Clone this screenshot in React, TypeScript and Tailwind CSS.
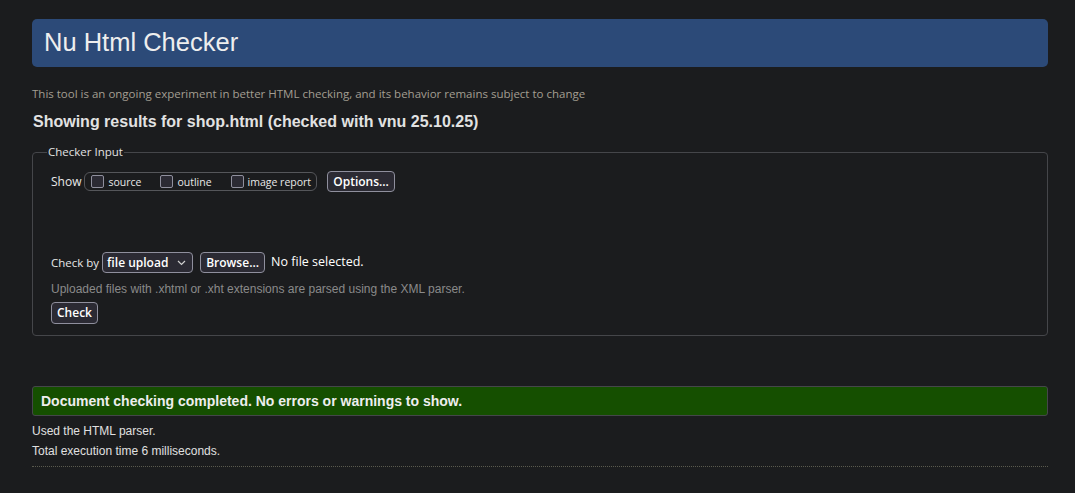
import React from 'react';

const sans = "font-['Liberation_Sans',Arial,sans-serif]";
const ui = "font-['Open_Sans','Noto_Sans',sans-serif]";

function Box({ label }: { label: string }) {
  return (
    <label className="flex flex-none items-center gap-[4px] whitespace-nowrap">
      <span className="w-[13px] h-[13px] rounded-[2px] border border-[#8f8f9d] bg-[#2b2a33]" />
      <span className="text-[10.5px] leading-[14px] text-[#e8e8e8]">{label}</span>
    </label>
  );
}

function Btn({ children, w }: { children: React.ReactNode; w: string }) {
  return (
    <button
      className={`${w} h-[21px] flex items-center justify-center rounded-[4px] border border-[#8f8f9d] bg-[#2b2a33] text-[12px] font-semibold text-white leading-none whitespace-nowrap`}
    >
      {children}
    </button>
  );
}

export default function App() {
  return (
    <div className={`min-h-[493px] bg-[#1b1c1e] ${sans}`}>
      <div className="w-[1016px] ml-[32px] pt-[19px] pb-[26px]">
        {/* Header */}
        <div className="h-[48px] rounded-[5px] bg-[#2c4a78] flex items-center pl-[12px]">
          <h1 className="text-[25.5px] leading-none text-[#eeeeee]">Nu Html Checker</h1>
        </div>

        <p className={`${ui} mt-[19px] text-[11.5px] leading-[16px] text-[#a39e92]`}>
          This tool is an ongoing experiment in better HTML checking, and its behavior remains subject to change
        </p>
        <h2 className="mt-[10px] ml-[1px] text-[16px] leading-[20px] font-bold text-[#e2e2e2]">
          Showing results for shop.html (checked with vnu 25.10.25)
        </h2>

        {/* Checker input */}
        <fieldset className={`${ui} mt-[12px] border border-[#45464a] rounded-[4px] pl-[18px] pb-[11px]`}>
          <legend className="ml-[-4px] px-[1px] text-[11.5px] leading-[16px] text-[#e2e2e2]">Checker Input</legend>

          <div className="pt-[11px] flex items-center h-[32px]">
            <span className="text-[12px] text-[#e8e8e8] mr-[3px]">Show</span>
            <div className="h-[19px] flex items-center gap-[19px] pl-[6px] pr-[5px] rounded-[6px] border border-[#55565a]">
              <Box label="source" />
              <Box label="outline" />
              <Box label="image report" />
            </div>
            <div className="ml-[10px]">
              <Btn w="w-[68px]">Options...</Btn>
            </div>
          </div>

          <div className="mt-[60px] flex items-center">
            <span className="text-[11.5px] text-[#e8e8e8] mr-[3px]">Check by</span>
            <div className="w-[91px] h-[21px] flex items-center justify-between pl-[4px] pr-[5px] rounded-[4px] border border-[#8f8f9d] bg-[#2b2a33]">
              <span className="text-[12px] font-semibold text-white leading-none">file upload</span>
              <svg width="9" height="6" viewBox="0 0 9 6" fill="none" className="mr-[1px]">
                <path d="M1 1l3.5 3.5L8 1" stroke="#d0d0d0" strokeWidth="1.2" />
              </svg>
            </div>
            <div className="ml-[7px]">
              <Btn w="w-[65px]">Browse...</Btn>
            </div>
            <span className="ml-[6px] text-[12.5px] text-white">No file selected.</span>
          </div>

          <p className={`${sans} mt-[8px] text-[12px] leading-[16px] text-[#8a8a8a]`}>
            Uploaded files with .xhtml or .xht extensions are parsed using the XML parser.
          </p>
          <div className="mt-[5px]">
            <button className="w-[47px] h-[22px] flex items-center justify-center rounded-[4px] border border-[#8f8f9d] bg-[#2b2a33] text-[12px] font-semibold text-white leading-none">
              Check
            </button>
          </div>
        </fieldset>

        {/* Result */}
        <div className="mt-[50px] h-[30px] flex items-center pl-[8px] rounded-[3px] border border-[#45464a] bg-[#154f00]">
          <p className="text-[14px] font-bold text-[#eeeeee]">Document checking completed. No errors or warnings to show.</p>
        </div>
        <div className="pt-[5px] border-b border-dotted border-[#5a5a4e] pb-[5px]">
          <p className="text-[12px] leading-[20px] text-[#e0e0e0]">Used the HTML parser.</p>
          <p className="text-[12px] leading-[20px] text-[#e0e0e0]">Total execution time 6 milliseconds.</p>
        </div>
      </div>
    </div>
  );
}
